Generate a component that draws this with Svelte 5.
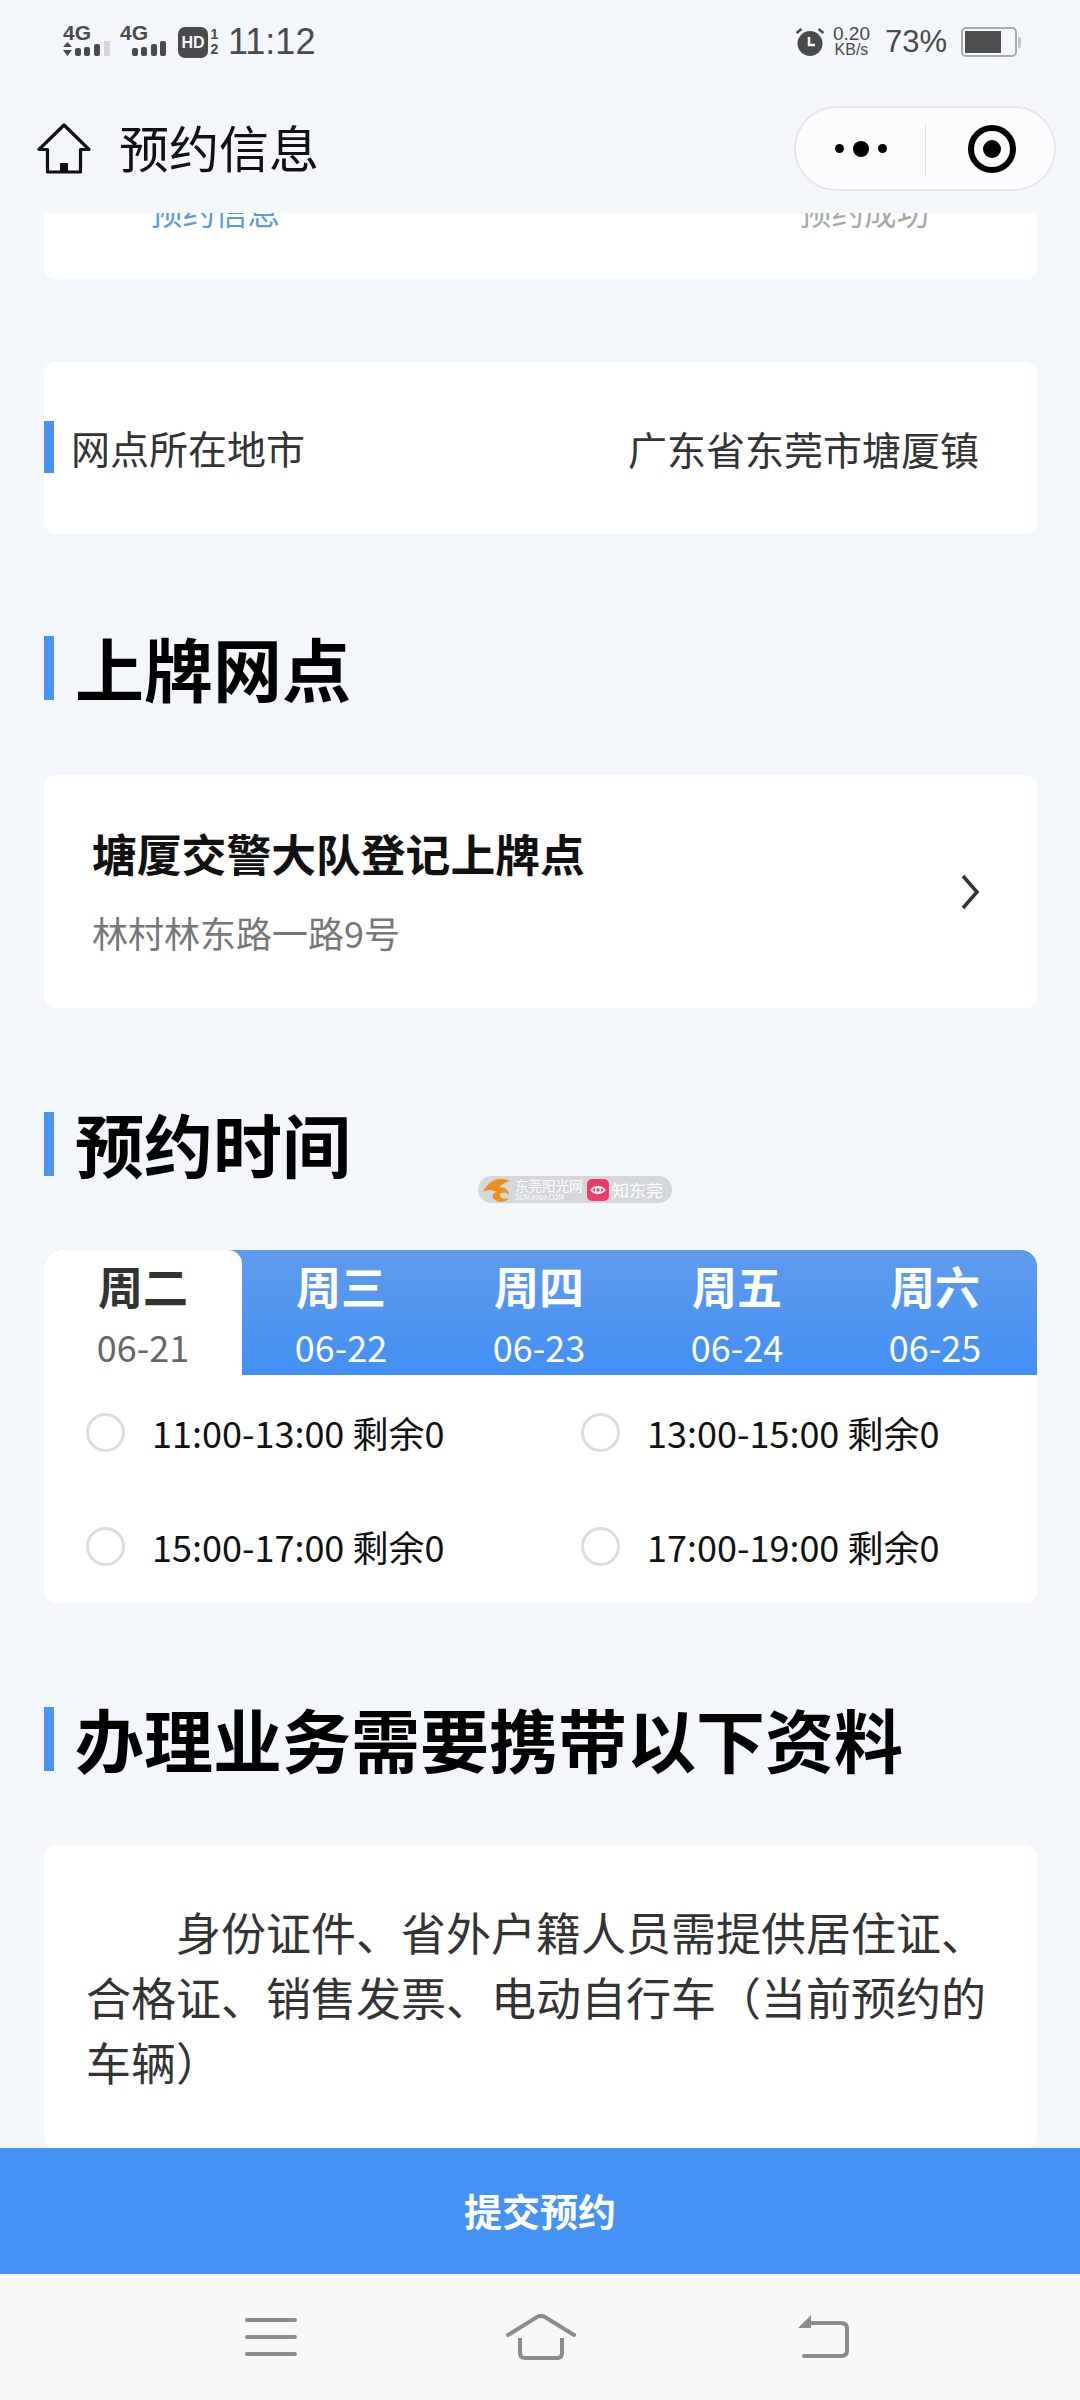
<script>
  const days = [
    { week: '周二', date: '06-21', active: true },
    { week: '周三', date: '06-22' },
    { week: '周四', date: '06-23' },
    { week: '周五', date: '06-24' },
    { week: '周六', date: '06-25' }
  ];
  const slots = ['11:00-13:00', '13:00-15:00', '15:00-17:00', '17:00-19:00'];
</script>

<div class="page">
  <div class="status">
    <div class="status-left">
      <svg class="signal" width="47" height="40" viewBox="0 -6 47 40">
        <text x="0" y="15" class="sig-text">4G</text>
        <path d="M0 22l4.500-5 4.500 5zM0 25h9l-4.500 6z" fill="#4a4a4a" />
        <rect x="12" y="23" width="6" height="8" rx="2" fill="#4a4a4a" />
        <rect x="21" y="22" width="6" height="9" rx="2" fill="#4a4a4a" />
        <rect x="31" y="19" width="6" height="12" rx="2" fill="#4a4a4a" />
        <rect x="41" y="16" width="6" height="15" rx="1" fill="#d4d6d9" />
      </svg>
      <svg class="signal two" width="47" height="40" viewBox="0 -6 47 40">
        <text x="0" y="15" class="sig-text">4G</text>
        <rect x="12" y="23" width="6" height="8" rx="2" fill="#4a4a4a" />
        <rect x="21" y="22" width="6" height="9" rx="2" fill="#4a4a4a" />
        <rect x="31" y="19" width="6" height="12" rx="2" fill="#4a4a4a" />
        <rect x="40" y="16" width="6" height="15" rx="2" fill="#4a4a4a" />
      </svg>
      <div class="hd">HD</div>
      <div class="sim"><span>1</span><span>2</span></div>
      <div class="clock">11:12</div>
    </div>
    <div class="status-right">
      <svg width="30" height="30" viewBox="0 0 30 30">
        <circle cx="15" cy="16.500" r="12.500" fill="#4a4a4a" />
        <path d="M1.500 6l5-4M28.500 6l-5-4" stroke="#4a4a4a" stroke-width="2.500" />
        <path d="M14 10v8h6" fill="none" stroke="#f3f6fa" stroke-width="2.500" />
      </svg>
      <div class="speed"><span>0.20</span><span class="speed-unit">KB/s</span></div>
      <div class="battery-text">73%</div>
      <div class="battery"><div class="battery-fill"></div></div>
      <div class="battery-nub"></div>
    </div>
  </div>

  <div class="navbar">
    <svg class="home" width="54" height="52" viewBox="0 0 54 52">
      <path d="M27 2L2 26.500h8.500V49h33V26.500H52z" fill="none" stroke="#111" stroke-width="3.200" stroke-linejoin="round" />
      <rect x="23" y="40" width="8" height="9" fill="#111" />
    </svg>
    <div class="nav-title">预约信息</div>
    <div class="capsule">
      <div class="dots"><i></i><b></b><i></i></div>
      <div class="capsule-line"></div>
      <div class="target"><span></span></div>
    </div>
  </div>

  <main>
    <section class="card steps">
      <span class="step-on">预约信息</span>
      <span class="step-off">预约成功</span>
    </section>

    <section class="card city">
      <div class="city-label">网点所在地市</div>
      <div class="city-value">广东省东莞市塘厦镇</div>
    </section>

    <h2 class="first">上牌网点</h2>
    <section class="card place">
      <div>
        <div class="place-name">塘厦交警大队登记上牌点</div>
        <div class="place-addr">林村林东路一路9号</div>
      </div>
      <svg width="20" height="36" viewBox="0 0 20 36">
        <path d="M3 2l14 16L3 34" fill="none" stroke="#333" stroke-width="3.500" />
      </svg>
    </section>

    <h2 class="second">预约时间</h2>
    <section class="card time">
      <div class="tabs">
        {#each days as day}
          <div class="tab" class:active={day.active}>
            <div class="week">{day.week}</div>
            <div class="date">{day.date}</div>
          </div>
        {/each}
      </div>
      <div class="slots">
        {#each slots as slot}
          <div class="slot">
            <span class="radio"></span>
            <span>{slot} 剩余0</span>
          </div>
        {/each}
      </div>
    </section>

    <h2 class="third">办理业务需要携带以下资料</h2>
    <section class="card notes">
      <p>身份证件、省外户籍人员需提供居住证、合格证、销售发票、电动自行车（当前预约的车辆）</p>
    </section>

    <div class="watermark">
      <svg width="30" height="26" viewBox="0 0 30 26">
        <path d="M28 4C18-1 6 3 1 15c6-3 10-2 14 0-5 1-6 5-2 8 5 3 11 2 14-2-3 1-8 1-9-2-1-4 6-5 9-1 0-5-4-8-10-8 3-3 7-5 11-6z" fill="#ee8f1c" />
      </svg>
      <span class="wm-a">东莞阳光网<small>SUN.0769.COM</small></span>
      <svg class="wm-icon" width="22" height="22" viewBox="0 0 22 22">
        <rect width="22" height="22" rx="5" fill="#f0396b" />
        <path d="M4 11q7-7 14 0q-7 7-14 0z" fill="none" stroke="#fff" stroke-width="1.500" />
        <circle cx="11" cy="11" r="2.500" fill="none" stroke="#fff" stroke-width="1.500" />
      </svg>
      <span class="wm-b">知东莞</span>
    </div>
  </main>

  <button class="submit">提交预约</button>

  <div class="sysnav">
    <svg class="nav-menu" width="52" height="42" viewBox="0 0 52 42">
      <path d="M2 4h48M2 21h48M2 38h48" stroke="#8c8c8c" stroke-width="4" stroke-linecap="round" />
    </svg>
    <svg class="nav-home" width="70" height="46" viewBox="0 0 70 46">
      <path d="M2 21L31 3q4-2 8 0l29 18" fill="none" stroke="#8c8c8c" stroke-width="4" stroke-linecap="round" />
      <path d="M14 24v15q0 5 5 5h32q5 0 5-5V24" fill="none" stroke="#8c8c8c" stroke-width="4" />
    </svg>
    <svg width="52" height="44" viewBox="0 0 52 44">
      <path d="M13 0v13H0z" fill="#8c8c8c" />
      <path d="M10 8h33q6 0 6 6v22q0 5-6 5H6" fill="none" stroke="#8c8c8c" stroke-width="4" stroke-linecap="round" />
    </svg>
  </div>
</div>

<style>
  :global(body) {
    background: #f3f6fa;
  }

  .page {
    display: flex;
    flex-direction: column;
    width: 1080px;
    height: 2400px;
    overflow: hidden;
    background: #f3f6fa;
    font-family: "Noto Sans CJK SC", "Noto Sans", sans-serif;
    color: #111;
  }

  .status {
    display: flex;
    justify-content: space-between;
    align-items: center;
    height: 84px;
    padding: 0 59px 0 63px;
    color: #4a4a4a;
    font-family: "Liberation Sans", sans-serif;
    flex: none;
  }

  .status-left,
  .status-right {
    display: flex;
    align-items: center;
  }

  .signal {
    margin: 0 10px 6px 0;
  }

  .signal.two {
    margin-right: 11px;
  }

  .sig-text {
    font: bold 21px "Liberation Sans", sans-serif;
    fill: #4a4a4a;
  }

  .hd {
    width: 30px;
    height: 31px;
    border-radius: 7px;
    background: #4a4a4a;
    color: #f3f6fa;
    font-size: 16px;
    font-weight: bold;
    line-height: 31px;
    text-align: center;
  }

  .sim {
    display: flex;
    flex-direction: column;
    width: 11px;
    margin: 0 8px 0 1px;
    font-size: 14px;
    font-weight: bold;
    line-height: 15px;
    text-align: center;
  }

  .clock {
    font-size: 36px;
  }

  .speed {
    display: flex;
    flex-direction: column;
    margin: 0 15px 0 8px;
    font-size: 19px;
    line-height: 16px;
    text-align: center;
  }

  .speed-unit {
    font-size: 16px;
  }

  .battery-text {
    font-size: 31px;
    margin-right: 14px;
  }

  .battery {
    width: 56px;
    height: 30px;
    padding: 2px;
    box-sizing: border-box;
    border: 2px solid #a8abae;
    border-radius: 5px;
  }

  .battery-fill {
    width: 36px;
    height: 100%;
    background: #4f4f4f;
  }

  .battery-nub {
    width: 3px;
    height: 11px;
    margin-left: 1px;
    border-radius: 0 2px 2px 0;
    background: #c4c6c8;
  }

  .navbar {
    display: flex;
    align-items: center;
    height: 129px;
    padding: 0 24px 0 37px;
    flex: none;
  }

  .home {
    margin-right: 28px;
  }

  .nav-title {
    margin-bottom: 6px;
    font-size: 50px;
    line-height: 60px;
  }

  .capsule {
    display: flex;
    align-items: center;
    width: 262px;
    height: 85px;
    margin-left: auto;
    border: 2px solid #e5e6e8;
    border-radius: 44px;
    background: #fbfcfd;
    box-sizing: border-box;
  }

  .dots {
    display: flex;
    align-items: center;
    justify-content: center;
    gap: 9px;
    width: 129px;
  }

  .dots i {
    width: 9px;
    height: 9px;
    border-radius: 50%;
    background: #000;
  }

  .dots b {
    width: 16px;
    height: 16px;
    border-radius: 50%;
    background: #000;
  }

  .capsule-line {
    width: 1px;
    height: 52px;
    background: #e2e3e5;
  }

  .target {
    display: flex;
    align-items: center;
    justify-content: center;
    width: 48px;
    height: 48px;
    margin-left: 42px;
    border: 6px solid #000;
    border-radius: 50%;
    box-sizing: border-box;
  }

  .target span {
    width: 18px;
    height: 18px;
    border-radius: 50%;
    background: #000;
  }

  main {
    position: relative;
    flex: 1;
    overflow: hidden;
  }

  .card {
    margin: 0 43px 0 44px;
    background: #fff;
    border-radius: 12px;
  }

  .steps {
    display: flex;
    justify-content: space-between;
    height: 66px;
    overflow: hidden;
    padding: 0 108px 0 106px;
    border-radius: 0 0 12px 12px;
    font-size: 32.500px;
    line-height: 40px;
  }

  .steps span {
    margin-top: -22px;
  }

  .step-on {
    color: #5a9bd8;
  }

  .step-off {
    color: #a8a8a8;
  }

  .city {
    display: flex;
    justify-content: space-between;
    align-items: center;
    height: 172px;
    margin-top: 83px;
    padding: 0 58px 0 0;
    font-size: 39px;
    color: #333;
  }

  .city-label {
    padding-left: 17px;
    margin-bottom: 2px;
    border-left: 10px solid #4a93f0;
    line-height: 52px;
    font-size: 39px;
  }

  h2 {
    margin: 0 0 0 44px;
    padding-left: 21px;
    height: 64px;
    border-left: 10px solid #4a93f0;
    font-size: 69px;
    font-weight: 700;
    line-height: 63px;
    color: #000;
  }

  h2.first {
    margin-top: 102px;
    margin-bottom: 75px;
  }

  h2.second {
    margin-top: 104px;
    margin-bottom: 74px;
  }

  h2.third {
    margin-top: 104px;
    margin-bottom: 74px;
  }

  .place {
    display: flex;
    justify-content: space-between;
    align-items: center;
    height: 233px;
    padding: 0 57px 0 48px;
    box-sizing: border-box;
  }

  .place-name {
    margin-top: -3px;
    font-size: 44.800px;
    font-weight: 700;
    line-height: 60px;
    color: #111;
  }

  .place-addr {
    margin-top: 24px;
    font-size: 36px;
    line-height: 50px;
    color: #777;
  }

  .tabs {
    display: flex;
    height: 125px;
    overflow: hidden;
    border-radius: 16px 16px 0 0;
    background: linear-gradient(#5f9beb, #4390f5);
    color: #fff;
  }

  .tab {
    flex: 0 0 198px;
    text-align: center;
  }

  .tab.active {
    background: #fff;
    border-radius: 0 14px 0 0;
    color: #333;
  }

  .tab.active .date {
    color: #666;
  }

  .week {
    margin-top: 9px;
    font-size: 45px;
    font-weight: 700;
    line-height: 54px;
  }

  .date {
    margin-top: 10px;
    font-size: 36px;
    line-height: 46px;
    color: #fff;
  }

  .slots {
    display: grid;
    grid-template-columns: 495px 1fr;
    row-gap: 64px;
    padding: 32px 0 32px 42px;
  }

  .slot {
    display: flex;
    align-items: center;
    height: 50px;
    font-size: 36px;
    color: #111;
  }

  .radio {
    width: 39px;
    height: 39px;
    margin-right: 27px;
    border: 3px solid #dcdcdc;
    border-radius: 50%;
    box-sizing: border-box;
  }

  .notes {
    padding: 54px 42px 0;
    height: 304px;
    box-sizing: border-box;
  }

  .notes p {
    margin: 0;
    font-size: 45px;
    line-height: 65px;
    text-indent: 2em;
    color: #333;
  }

  .watermark {
    position: absolute;
    left: 478px;
    top: 963px;
    display: flex;
    align-items: center;
    width: 194px;
    height: 27px;
    padding-left: 4px;
    box-sizing: border-box;
    border-radius: 14px;
    background: #d5d8db;
    color: #fff;
    white-space: nowrap;
  }

  .wm-a {
    display: flex;
    flex-direction: column;
    width: 72px;
    margin-left: 3px;
    font-size: 13.500px;
    line-height: 15px;
  }

  .wm-a small {
    font-size: 7px;
    line-height: 8px;
  }

  .wm-icon {
    flex: none;
  }

  .wm-b {
    margin-left: 3px;
    font-size: 17px;
    line-height: 27px;
  }

  .submit {
    flex: none;
    width: 100%;
    height: 126px;
    border: none;
    padding: 0 0 4px;
    background: #4492f4;
    color: #fff;
    font-family: inherit;
    font-size: 38px;
    font-weight: 700;
  }

  .sysnav {
    display: flex;
    align-items: center;
    flex: none;
    height: 126px;
    padding-left: 245px;
    background: #f7f7f7;
  }

  .nav-menu {
    margin-right: 209px;
  }

  .nav-home {
    margin-right: 222px;
  }
</style>
